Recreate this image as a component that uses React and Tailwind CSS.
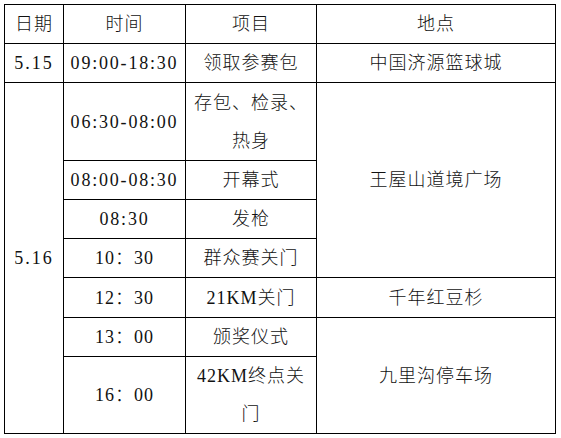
import React from "react";

const td = "border border-black p-0 text-center align-middle";
const cn = "tracking-[1px] font-light";
const tm = "tracking-[1.8px]";

export default function App() {
  return (
    <div className="w-[561px] h-[438px] bg-white pt-[4px] pl-[4px] font-['Liberation_Serif','Noto_Sans_CJK_SC',serif] text-[18px] leading-[30px] text-[#111]">
      <table className="table-fixed w-[551px]">
        <colgroup>
          <col className="w-[59px]" />
          <col className="w-[122px]" />
          <col className="w-[131px]" />
          <col className="w-[239px]" />
        </colgroup>
        <tbody>
          <tr className="h-[39px]">
            <td className={`${td} ${cn}`}>日期</td>
            <td className={`${td} ${cn}`}>时间</td>
            <td className={`${td} ${cn}`}>项目</td>
            <td className={`${td} ${cn}`}>地点</td>
          </tr>
          <tr className="h-[39px]">
            <td className={`${td} tracking-[2px]`}>5.15</td>
            <td className={`${td} ${tm}`}>09:00-18:30</td>
            <td className={`${td} ${cn}`}>领取参赛包</td>
            <td className={`${td} ${cn}`}>中国济源篮球城</td>
          </tr>
          <tr className="h-[78px]">
            <td rowSpan={7} className={`${td} tracking-[2px]`}>5.16</td>
            <td className={`${td} ${tm}`}>06:30-08:00</td>
            <td className={`${td} ${cn} leading-[38px]`}>存包、检录、<br />热身</td>
            <td rowSpan={4} className={`${td} ${cn}`}>王屋山道境广场</td>
          </tr>
          <tr className="h-[39px]">
            <td className={`${td} ${tm}`}>08:00-08:30</td>
            <td className={`${td} ${cn}`}>开幕式</td>
          </tr>
          <tr className="h-[39px]">
            <td className={`${td} ${tm}`}>08:30</td>
            <td className={`${td} ${cn}`}>发枪</td>
          </tr>
          <tr className="h-[39px]">
            <td className={`${td} ${cn}`}>10：30</td>
            <td className={`${td} ${cn}`}>群众赛关门</td>
          </tr>
          <tr className="h-[40px]">
            <td className={`${td} ${cn}`}>12：30</td>
            <td className={`${td} ${cn}`}>21KM关门</td>
            <td className={`${td} ${cn}`}>千年红豆杉</td>
          </tr>
          <tr className="h-[39px]">
            <td className={`${td} ${cn}`}>13：00</td>
            <td className={`${td} ${cn}`}>颁奖仪式</td>
            <td rowSpan={2} className={`${td} ${cn}`}>九里沟停车场</td>
          </tr>
          <tr className="h-[77px]">
            <td className={`${td} ${cn}`}>16：00</td>
            <td className={`${td} ${cn} leading-[38px]`}>42KM终点关<br />门</td>
          </tr>
        </tbody>
      </table>
    </div>
  );
}
